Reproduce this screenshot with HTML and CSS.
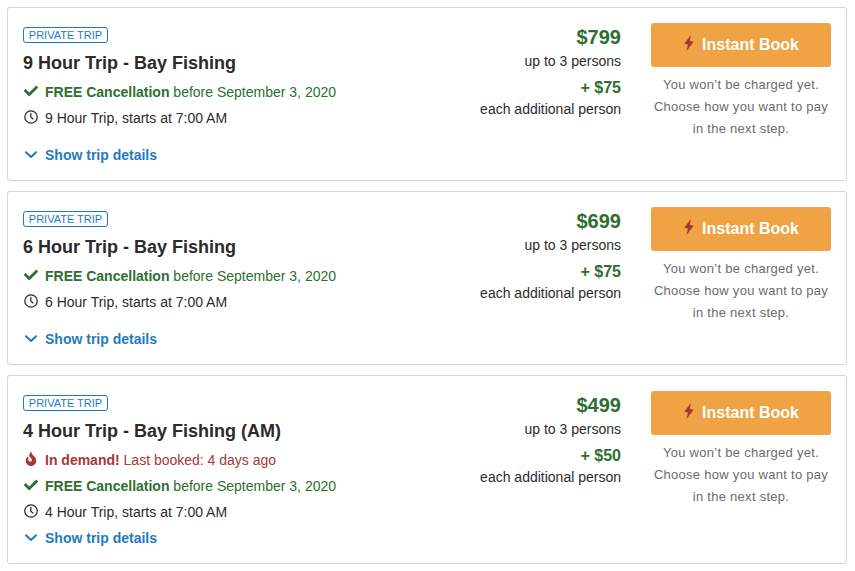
FILE: index.html
```html
<!DOCTYPE html>
<html lang="en">
<head>
  <meta charset="UTF-8" />
  <meta name="viewport" content="width=device-width, initial-scale=1.0" />
  <title>Bay Fishing Trips</title>
  <link rel="stylesheet" href="styles.css">
</head>
<body>
  <!-- Shared icons -->
  <svg class="sprite" aria-hidden="true">
    <symbol id="check" viewBox="0 0 512 512"><path d="M173.898 439.404l-166.4-166.4c-9.997-9.997-9.997-26.206 0-36.204l36.203-36.204c9.997-9.998 26.207-9.998 36.204 0L192 312.69 432.095 72.596c9.997-9.997 26.207-9.997 36.204 0l36.203 36.204c9.997 9.997 9.997 26.206 0 36.204l-294.4 294.401c-9.998 9.997-26.207 9.997-36.204-.001z"/></symbol>
    <symbol id="clock" viewBox="0 0 14 14"><circle cx="7" cy="7" r="6.2" fill="none" stroke="currentColor" stroke-width="1.3"/><path d="M6.8 3.4v3.8l2.2 1.7" fill="none" stroke="currentColor" stroke-width="1.3" stroke-linecap="round"/></symbol>
    <symbol id="chevron" viewBox="0 0 14 14"><path d="M2 5.2L7 10l5-4.8" fill="none" stroke="currentColor" stroke-width="2" stroke-linecap="round" stroke-linejoin="round"/></symbol>
    <symbol id="fire" viewBox="0 0 384 512"><path fill-rule="evenodd" d="M216 24c0-24-31-33-45-13C48 191 224 200 224 288c0 36-29 64-65 64-35 0-63-29-63-65v-85c0-22-27-32-42-16C28 214 0 261 0 320c0 106 86 192 192 192s192-86 192-192c0-170-168-193-168-296z"/></symbol>
    <symbol id="bolt" viewBox="0 0 10 16"><path d="M6.8 0L.3 8.7l3.7.8L2.5 16l7.2-9.2-3.9-.8z"/></symbol>
  </svg>

  <main class="trips">
    <section class="trip-card">
      <div class="trip-info">
        <span class="badge">PRIVATE TRIP</span>
        <h3>9 Hour Trip - Bay Fishing</h3>
        <p class="row green"><svg class="icon"><use href="#check"/></svg><span><b>FREE Cancellation</b> before September 3, 2020</span></p>
        <p class="row"><svg class="icon"><use href="#clock"/></svg><span>9 Hour Trip, starts at 7:00 AM</span></p>
        <a class="row details"><svg class="icon"><use href="#chevron"/></svg><span>Show trip details</span></a>
      </div>
      <div class="price">
        <p class="amount">$799</p>
        <p>up to 3 persons</p>
        <p class="extra">+ $75</p>
        <p class="each">each additional person</p>
      </div>
      <div class="booking">
        <button class="book-button"><svg class="bolt"><use href="#bolt"/></svg>Instant Book</button>
        <p class="note">You won’t be charged yet.<br>Choose how you want to pay<br>in the next step.</p>
      </div>
    </section>

    <section class="trip-card">
      <div class="trip-info">
        <span class="badge">PRIVATE TRIP</span>
        <h3>6 Hour Trip - Bay Fishing</h3>
        <p class="row green"><svg class="icon"><use href="#check"/></svg><span><b>FREE Cancellation</b> before September 3, 2020</span></p>
        <p class="row"><svg class="icon"><use href="#clock"/></svg><span>6 Hour Trip, starts at 7:00 AM</span></p>
        <a class="row details"><svg class="icon"><use href="#chevron"/></svg><span>Show trip details</span></a>
      </div>
      <div class="price">
        <p class="amount">$699</p>
        <p>up to 3 persons</p>
        <p class="extra">+ $75</p>
        <p class="each">each additional person</p>
      </div>
      <div class="booking">
        <button class="book-button"><svg class="bolt"><use href="#bolt"/></svg>Instant Book</button>
        <p class="note">You won’t be charged yet.<br>Choose how you want to pay<br>in the next step.</p>
      </div>
    </section>

    <section class="trip-card">
      <div class="trip-info">
        <span class="badge">PRIVATE TRIP</span>
        <h3>4 Hour Trip - Bay Fishing (AM)</h3>
        <p class="row red"><svg class="icon"><use href="#fire"/></svg><span><b>In demand!</b> Last booked: 4 days ago</span></p>
        <p class="row green"><svg class="icon"><use href="#check"/></svg><span><b>FREE Cancellation</b> before September 3, 2020</span></p>
        <p class="row"><svg class="icon"><use href="#clock"/></svg><span>4 Hour Trip, starts at 7:00 AM</span></p>
        <a class="row details"><svg class="icon"><use href="#chevron"/></svg><span>Show trip details</span></a>
      </div>
      <div class="price">
        <p class="amount">$499</p>
        <p>up to 3 persons</p>
        <p class="extra">+ $50</p>
        <p class="each">each additional person</p>
      </div>
      <div class="booking">
        <button class="book-button"><svg class="bolt"><use href="#bolt"/></svg>Instant Book</button>
        <p class="note">You won’t be charged yet.<br>Choose how you want to pay<br>in the next step.</p>
      </div>
    </section>
  </main>
</body>
</html>
```

FILE: styles.css
```css
* {
  box-sizing: border-box;
}
body {
  font-family: "Liberation Sans", Arial, sans-serif;
  font-size: 14px;
  background-color: #fff;
  margin: 0;
  color: #2b2b2b;
}
p, h3 {
  margin: 0;
}
.sprite {
  display: none;
}
.trips {
  width: 840px;
  margin: 7px 0 0 7px;
  display: flex;
  flex-direction: column;
  gap: 10px;
}
.trip-card {
  display: flex;
  min-height: 174px;
  padding: 15px 15px 12px;
  border: 1px solid #d5d5d5;
  border-radius: 3px;
}
.trip-info {
  flex: 1;
  display: flex;
  flex-direction: column;
  align-items: flex-start;
}
.badge {
  width: 85px;
  height: 16px;
  margin-top: 4px;
  border: 1px solid #1f7bbf;
  border-radius: 3px;
  color: #1f7bbf;
  font-size: 11px;
  line-height: 15px;
  text-align: center;
  white-space: nowrap;
}
h3 {
  margin: 7px 0 3px;
  font-size: 18px;
  line-height: 26px;
}
.row {
  display: flex;
  align-items: center;
  height: 26px;
  line-height: 26px;
}
.icon {
  width: 14px;
  height: 14px;
  margin: 0 7px 2px 1px;
  fill: currentColor;
}
.green {
  color: #2d6e31;
}
.red {
  color: #a33838;
}
.details {
  margin-top: auto;
  color: #1f7bbf;
  font-weight: bold;
}
.price {
  padding-top: 2px;
  text-align: right;
  line-height: 24px;
}
.amount, .extra {
  color: #2d6e31;
  font-weight: bold;
}
.amount {
  font-size: 20px;
}
.extra {
  margin-top: 3px;
  font-size: 16px;
}
.each {
  margin-top: -3px;
}
.booking {
  width: 180px;
  margin-left: 30px;
}
.book-button {
  display: flex;
  align-items: center;
  justify-content: center;
  gap: 8px;
  width: 100%;
  height: 44px;
  padding: 0 0 0 1px;
  border: none;
  border-radius: 3px;
  background-color: #efa345;
  color: #fff;
  font-family: inherit;
  font-size: 16px;
  font-weight: bold;
  cursor: pointer;
}
.bolt {
  width: 10px;
  height: 16px;
  margin-bottom: 4px;
  fill: #a33838;
}
.note {
  margin-top: 7px;
  color: #6b6b6b;
  font-size: 13px;
  line-height: 22px;
  letter-spacing: 0.28px;
  text-align: center;
  white-space: nowrap;
}
```
